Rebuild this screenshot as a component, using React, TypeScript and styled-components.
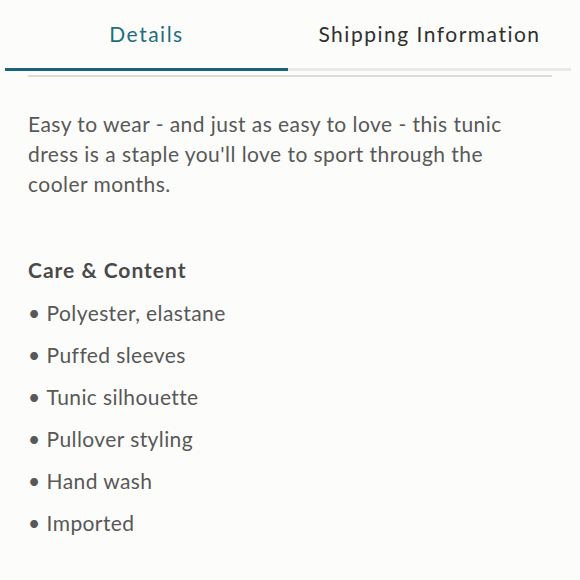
import styled, { createGlobalStyle } from 'styled-components';

const GlobalStyle = createGlobalStyle`
  body {
    margin: 0;
    background: #fcfcfa;
    font-family: Lato, "Noto Sans", sans-serif;
  }
`;

const Page = styled.div`
  width: 580px;
  height: 580px;
  background: #fcfcfa;
  overflow: hidden;
`;

const TabBar = styled.div`
  display: flex;
  padding: 0 9px 0 5px;
`;

const Tab = styled.div<{ $active?: boolean }>`
  flex: 1;
  height: 67px;
  display: flex;
  align-items: center;
  justify-content: center;
  padding-bottom: 1px;
  font-size: 21px;
  letter-spacing: 1.5px;
  color: ${(p) => (p.$active ? '#1f6e7e' : '#2f2f2f')};
  border-bottom: 3px solid ${(p) => (p.$active ? '#1b6676' : '#e9e9e7')};
  box-sizing: content-box;
`;

const Divider = styled.hr`
  margin: 4px 28px 0 28px;
  border: none;
  border-top: 2px solid #dcdcda;
`;

const Content = styled.div`
  padding: 32px 28px 0 28px;
  color: #585858;
  font-size: 21px;
`;

const Description = styled.p`
  margin: 0;
  max-width: 500px;
  line-height: 30px;
  letter-spacing: 0.45px;
`;

const Heading = styled.h3`
  margin: 56px 0 0 0;
  font-size: 21px;
  font-weight: 700;
  letter-spacing: 1px;
  color: #4a4a4a;
  line-height: 30px;
`;

const List = styled.ul`
  list-style: none;
  margin: 7px 0 0 0;
  padding: 0;
`;

const Item = styled.li`
  line-height: 42px;
  letter-spacing: 0.4px;
  &::before {
    content: '•';
    margin-right: 6px;
  }
`;

const items = [
  'Polyester, elastane',
  'Puffed sleeves',
  'Tunic silhouette',
  'Pullover styling',
  'Hand wash',
  'Imported',
];

export default function App() {
  return (
    <Page>
      <GlobalStyle />
      <TabBar>
        <Tab $active>Details</Tab>
        <Tab>Shipping Information</Tab>
      </TabBar>
      <Divider />
      <Content>
        <Description>
          Easy to wear - and just as easy to love - this tunic dress is a staple you'll love to sport through the
          cooler months.
        </Description>
        <Heading>Care &amp; Content</Heading>
        <List>
          {items.map((item) => (
            <Item key={item}>{item}</Item>
          ))}
        </List>
      </Content>
    </Page>
  );
}
